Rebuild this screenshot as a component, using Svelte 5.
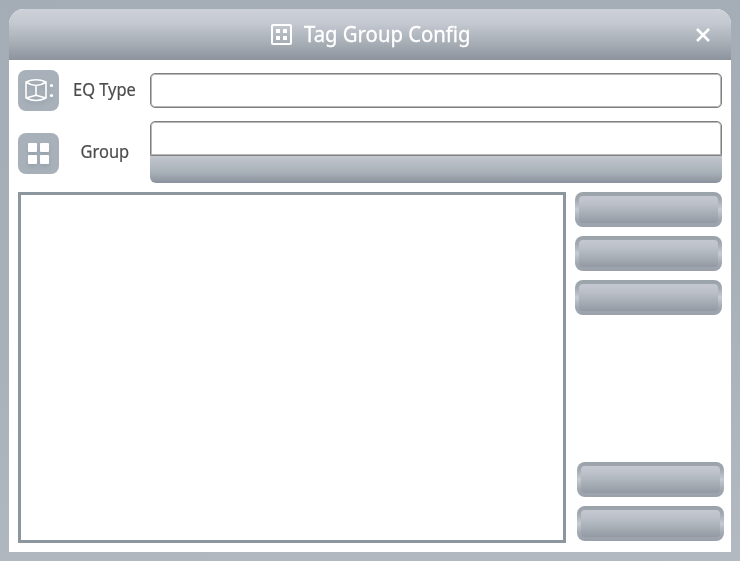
<script>
  const topActions = [1, 2, 3];
  const bottomActions = [4, 5];
</script>

<div class="frame">
  <section class="dialog">
    <header>
      <div class="title">
        <svg width="21" height="21" viewBox="0 0 21 21" fill="#fff">
          <rect x="1" y="1" width="19" height="19" rx="1" fill="none" stroke="#fff" stroke-width="2" />
          <path d="M5 5h4v4H5zM12 5h4v4h-4zM5 12h4v4H5zM12 12h4v4h-4z" />
        </svg>
        <h1>Tag Group Config</h1>
      </div>
      <button class="close" aria-label="Close">
        <svg width="14" height="14" viewBox="0 0 14 14" fill="none" stroke="#fff" stroke-width="2.6">
          <path d="M1 1l12 12M13 1L1 13" />
        </svg>
      </button>
    </header>

    <div class="row type">
      <span class="tile">
        <svg width="41" height="41" viewBox="0 0 41 41" fill="none" stroke="#fff" stroke-width="1.6" stroke-linejoin="round">
          <path d="M8 12Q18 7.5 28 12V28Q18 33 8 28ZM8 12Q18 19 28 12M18 15.5V25.5M8 28L18 25.2L28 28" />
          <g fill="#fff" stroke="none">
            <circle cx="33.5" cy="15.5" r="1.6" />
            <circle cx="33.5" cy="25.5" r="1.6" />
          </g>
        </svg>
      </span>
      <label for="eq"><span>EQ Type</span></label>
      <input id="eq" />
    </div>

    <div class="row group">
      <span class="tile">
        <svg width="41" height="41" viewBox="0 0 41 41" fill="#fff">
          <rect x="10" y="10" width="9" height="9" rx="1" />
          <rect x="22" y="10" width="9" height="9" rx="1" />
          <rect x="10" y="22" width="9" height="9" rx="1" />
          <rect x="22" y="22" width="9" height="9" rx="1" />
        </svg>
      </span>
      <label for="group"><span>Group</span></label>
      <div class="combo">
        <input id="group" />
        <button class="bar" aria-label="Group options"></button>
      </div>
    </div>

    <div class="content">
      <div class="list"></div>
      <div class="actions">
        {#each topActions as id (id)}
          <button class="action" aria-label="Action {id}"><span></span></button>
        {/each}
        <div class="spacer"></div>
        {#each bottomActions as id (id)}
          <button class="action low" aria-label="Action {id}"><span></span></button>
        {/each}
      </div>
    </div>
  </section>
</div>

<style>
  :global(body) {
    margin: 0;
    overflow: hidden;
  }
  * {
    box-sizing: border-box;
  }
  svg {
    display: block;
  }
  button {
    border: 0;
    padding: 0;
    background: none;
  }
  .frame {
    width: 740px;
    height: 561px;
    padding: 9px;
    background: linear-gradient(175deg, #a4acb6, #a7b0b7 50%, #b2b9c1);
    font-family: "Noto Sans", "Open Sans", sans-serif;
  }
  .dialog {
    height: 543px;
    display: flex;
    flex-direction: column;
    background: #fff;
    border-radius: 15px 15px 0 0;
    overflow: hidden;
  }
  header {
    flex: none;
    height: 51px;
    display: flex;
    align-items: center;
    justify-content: flex-end;
    padding-right: 21px;
    background: linear-gradient(#ced2d8, #c3c7cf 30%, #a8afb7 65%, #8c939d);
  }
  .title {
    flex: 1;
    display: flex;
    align-items: center;
    padding-left: 262px;
    gap: 12px;
  }
  h1 {
    margin: 0 0 1px;
    color: #fff;
    font-size: 21px;
    font-weight: 400;
    line-height: 28px;
    white-space: nowrap;
    transform: scaleX(0.967);
    transform-origin: left;
    -webkit-text-stroke: 0.3px #fff;
  }
  .row {
    flex: none;
    display: flex;
    padding: 0 9px;
  }
  .type {
    padding-top: 10px;
    height: 61px;
  }
  .group {
    height: 71px;
  }
  .tile {
    width: 41px;
    height: 41px;
    border-radius: 8px;
    background: #a8b1b9;
  }
  .tile svg {
    filter: drop-shadow(0 3px 2px #7f8b9566);
  }
  .group .tile {
    margin-top: 12px;
  }
  label {
    width: 91px;
    text-align: center;
    color: #4c4c4c;
    font-size: 17.5px;
    line-height: 24px;
    white-space: nowrap;
    margin-top: 7px;
    -webkit-text-stroke: 0.2px #4c4c4c;
  }
  label span {
    display: inline-block;
    transform: scaleX(0.94);
  }
  .group label {
    margin-top: 18px;
  }
  input {
    width: 572px;
    height: 35px;
    padding: 0 8px;
    border: 1px solid #808080;
    border-radius: 5px;
    background: #fff;
    box-shadow: inset 0 0 0 1px #b8b8b8;
    outline: none;
    font: inherit;
  }
  .type input {
    margin-top: 3px;
  }
  .combo {
    width: 572px;
    display: flex;
    flex-direction: column;
  }
  .combo input {
    border-radius: 5px 5px 0 0;
  }
  .bar {
    height: 27px;
    border-radius: 0 0 6px 6px;
    background: linear-gradient(#c3c7cf, #a8b0b8 60%, #8b929d);
  }
  .content {
    flex: 1;
    display: flex;
    gap: 9px;
    padding: 0 7px 9px 9px;
  }
  .list {
    width: 548px;
    border: 3px solid #8b969f;
  }
  .actions {
    width: 149px;
    display: flex;
    flex-direction: column;
    gap: 9px;
    padding-bottom: 2px;
  }
  .action {
    flex: none;
    width: 147px;
    height: 35px;
    padding: 4px;
    display: flex;
    border-radius: 8px;
    background: linear-gradient(#9aa2aa, #a0a7af 20%, #c6cad2 50%, #a0a7af 80%, #9aa1ab);
  }
  .action span {
    flex: 1;
    border-radius: 4px;
    background: linear-gradient(#c5c8d0, #bbc0c8 30%, #a4abb3 70%, #9299a3);
  }
  .low {
    align-self: flex-end;
  }
  .spacer {
    flex: 1;
  }
</style>
